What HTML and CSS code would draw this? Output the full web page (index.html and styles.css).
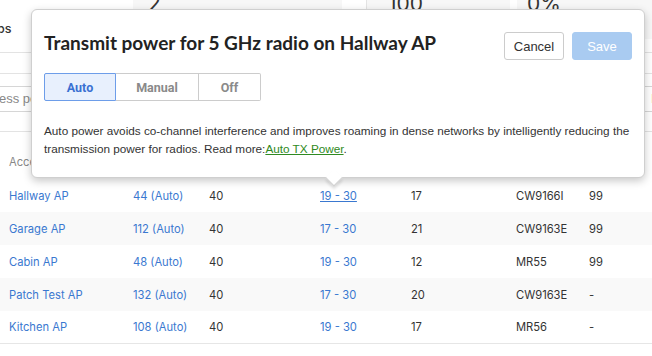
FILE: index.html
```html
<!DOCTYPE html>
<html>
<head>
<meta charset="utf-8">
<link rel="stylesheet" href="styles.css">
</head>
<body>
<div class="page">
  <div class="stats">
    <div class="stats-track">
      <div class="stat stat-first"><span class="stat-label">Groups</span></div>
      <div class="stat stat-grey"><span class="stat-num">2</span></div>
      <div class="stat-sep"></div>
      <div class="stat stat-grey stat-mid"><span class="stat-num">100</span></div>
      <div class="stat-sep small"></div>
      <div class="stat stat-grey stat-last"><span class="stat-num">0%</span></div>
    </div>
  </div>
  <div class="band"></div>
  <div class="tabs"></div>
  <div class="search-row">
    <div class="search">address point</div>
    <div class="search-btn">Info</div>
  </div>
  <div class="table">
    <div class="row head">
      <div>Access point</div><div>Channel</div><div>Width</div><div>Power range</div><div>Power</div><div>Model</div><div>Util</div><div></div>
    </div>
    <div class="row">
      <a class="link">Hallway AP</a><a class="link">44 (Auto)</a><div>40</div><a class="link under">19 - 30</a><div>17</div><div>CW9166I</div><div>99</div><div></div>
    </div>
    <div class="row alt">
      <a class="link">Garage AP</a><a class="link">112 (Auto)</a><div>40</div><a class="link">17 - 30</a><div>21</div><div>CW9163E</div><div>99</div><div></div>
    </div>
    <div class="row">
      <a class="link">Cabin AP</a><a class="link">48 (Auto)</a><div>40</div><a class="link">19 - 30</a><div>12</div><div>MR55</div><div>99</div><div></div>
    </div>
    <div class="row alt">
      <a class="link">Patch Test AP</a><a class="link">132 (Auto)</a><div>40</div><a class="link">17 - 30</a><div>20</div><div>CW9163E</div><div>-</div><div></div>
    </div>
    <div class="row">
      <a class="link">Kitchen AP</a><a class="link">108 (Auto)</a><div>40</div><a class="link">19 - 30</a><div>17</div><div>MR56</div><div>-</div><div></div>
    </div>
  </div>

  <div class="popover">
    <div class="pop-head">
      <h2 class="pop-title">Transmit power for 5 GHz radio on Hallway AP</h2>
      <div class="pop-actions">
        <button class="btn btn-cancel">Cancel</button>
        <button class="btn btn-save">Save</button>
      </div>
    </div>
    <div class="segmented">
      <button class="seg seg-auto active">Auto</button>
      <button class="seg seg-manual">Manual</button>
      <button class="seg seg-off">Off</button>
    </div>
    <p class="pop-text">Auto power avoids co-channel interference and improves roaming in dense networks by intelligently reducing the transmission power for radios. Read more:<a class="green">Auto TX Power</a>.</p>
    <div class="arrow"></div>
  </div>
</div>
</body>
</html>
```

FILE: styles.css
```css
* { box-sizing: border-box; }
html, body { margin: 0; padding: 0; background: #fff; }
body { width: 652px; height: 356px; overflow: hidden; font-family: Inter, "Liberation Sans", sans-serif; color: #333; }
.page { position: relative; width: 652px; height: 356px; }

.stats { height: 39px; overflow: hidden; background: #fff; }
.stats-track { display: flex; margin-left: -32px; height: 39px; }
.stat { height: 39px; flex: none; }
.stat-first { width: 165px; background: #fff; padding-top: 17px; padding-left: 0; }
.stat-label { font-size: 12.5px; font-weight: 500; color: #333; }
.stat-grey { background: #f7f7f7; padding-left: 15px; width: 209px; }
.stat-mid { width: 143px; padding-left: 21px; }
.stat-last { width: 140px; padding-left: 10px; }
.stat-sep { width: 25px; flex: none; background: #fff; border-right: 1px solid #e4e4e4; }
.stat-sep.small { width: 7px; border-right: 0; }
.stat-num { display: block; font-size: 21px; line-height: 20px; margin-top: -6px; color: #333; }

.band { height: 14px; border-bottom: 1px solid #e3e3e3; }
.tabs { height: 21px; border-bottom: 1px solid #e3e3e3; }
.search-row { display: flex; justify-content: space-between; padding-top: 12px; height: 58px; border-bottom: 1px solid #e3e3e3; }
.search { margin-left: -38px; width: 400px; height: 26px; border: 1px solid #d6d6d6; border-radius: 3px; font-size: 13px; line-height: 24px; padding-left: 10px; color: #888; font-family: "Liberation Sans", sans-serif; }
.search-btn { width: 40px; height: 26px; border: 1px solid #d6d6d6; border-radius: 3px; font-size: 13px; line-height: 24px; padding-left: 10px; margin-right: -28px; font-family: "Liberation Sans", sans-serif; }

.row { display: grid; grid-template-columns: 124px 76px 111px 91px 105px 73px 40px 1fr; padding-left: 9px; height: 33px; align-items: center; font-size: 11.2px; color: #333; }
.row.alt { background: #f9f9f9; }
.row.head { height: 47px; color: #888; align-items: end; padding-bottom: 10px; }
.row:last-child { border-bottom: 1px solid #e6e6e6; }
.link { color: #3a78d0; text-decoration: none; }
.link.under { text-decoration: underline; }

.popover { position: absolute; left: 31px; top: 9px; width: 614px; height: 169px; background: #fff; border: 1px solid #cfcfcf; border-radius: 6px; box-shadow: 0 3px 8px rgba(0,0,0,0.22); padding: 22px 12px 0 12px; }
.pop-head { display: flex; justify-content: space-between; align-items: flex-start; }
.pop-title { margin: 0; font-size: 19px; line-height: 24px; font-weight: 700; color: #222; font-family: Lato, Inter, sans-serif; margin-top: -1px; }
.pop-actions { display: flex; gap: 8px; }
.btn { height: 28px; width: 60px; border-radius: 3px; font-family: "Liberation Sans", Arial, sans-serif; font-size: 13px; padding: 0; cursor: pointer; }
.btn-cancel { background: #fff; border: 1px solid #cccccc; color: #333; }
.btn-save { background: #a9cbf1; border: 1px solid #a9cbf1; color: #fff; }

.segmented { display: flex; margin-top: 13px; }
.seg { height: 28px; background: #fff; border: 1px solid #cccccc; font-family: Roboto, "Liberation Sans", sans-serif; font-weight: 700; font-size: 12.5px; color: #8a8a8a; padding: 0; }
.seg + .seg { border-left: 0; }
.seg-auto { width: 72px; border-radius: 2px 0 0 2px; }
.seg-manual { width: 83px; }
.seg-off { width: 62px; border-radius: 0 2px 2px 0; }
.seg.active { background: #e8f0fd; border-color: #6d9de9; color: #3a70d2; }

.pop-text { margin: 21px 0 0 0; font-family: "Liberation Sans", Arial, sans-serif; font-size: 11.75px; line-height: 18px; color: #333; }
.green { color: #2f8a22; text-decoration: underline; }

.arrow { position: absolute; left: 296px; bottom: -7px; width: 12px; height: 12px; background: #fff; transform: rotate(45deg); border-right: 1px solid #cfcfcf; border-bottom: 1px solid #cfcfcf; box-shadow: 2px 2px 3px rgba(0,0,0,0.12); }
```
